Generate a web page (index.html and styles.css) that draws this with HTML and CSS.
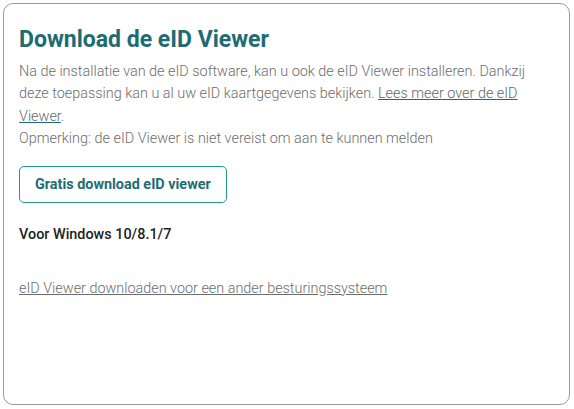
FILE: index.html
```html
<!DOCTYPE html>
<html lang="nl">

<head>
    <meta charset="UTF-8">
    <meta name="viewport" content="width=device-width, initial-scale=1.0">
    <title>Download de eID Viewer</title>
    <link rel="stylesheet" href="styles.css">
</head>

<body>
    <div class="card">
        <h2 class="card-title">Download de eID Viewer</h2>
        <p class="intro">
            Na de installatie van de eID software, kan u ook de eID Viewer installeren. Dankzij
            deze toepassing kan u al uw eID kaartgegevens bekijken. <a href="#" class="more-link">Lees meer over de eID Viewer</a>.
            <br>
            Opmerking: de eID Viewer is niet vereist om aan te kunnen melden
        </p>
        <a href="#" class="download-btn">Gratis download eID viewer</a>
        <p class="platform">Voor Windows 10/8.1/7</p>
        <a href="#" class="other-link">eID Viewer downloaden voor een ander besturingssysteem</a>
    </div>
</body>

</html>
```

FILE: styles.css
```css
body {
    font-family: Roboto, "Open Sans", Arial, sans-serif;
    margin: 0;
    padding: 3px;
    background-color: #fff;
}

.card {
    box-sizing: border-box;
    width: 567px;
    height: 402px;
    border: 1px solid #9a9a9a;
    border-radius: 10px;
    padding: 21px 18px 16px 15px;
}

.card-title {
    margin: 0 0 6px;
    font-size: 23px;
    font-weight: 700;
    line-height: 30px;
    color: #1d6c72;
}

.intro {
    margin: 0;
    font-size: 14.4px;
    line-height: 22.4px;
    color: #6d6d6d;
    font-weight: 300;
}

.more-link {
    color: #5f6a6b;
    text-decoration: underline;
    text-decoration-color: #1d6c72;
}

.download-btn {
    display: inline-block;
    margin-top: 15px;
    padding: 0 15px;
    height: 37px;
    line-height: 35px;
    box-sizing: border-box;
    border: 1px solid #22998e;
    border-radius: 5px;
    font-size: 14.4px;
    font-weight: 700;
    color: #1d6c72;
    text-decoration: none;
}

.platform {
    margin: 23px 0 0;
    font-size: 14.4px;
    font-weight: 500;
    color: #222;
}

.other-link {
    display: inline-block;
    margin-top: 37px;
    font-size: 14.4px;
    font-weight: 300;
    color: #6d6d6d;
    text-decoration: underline;
}
```
